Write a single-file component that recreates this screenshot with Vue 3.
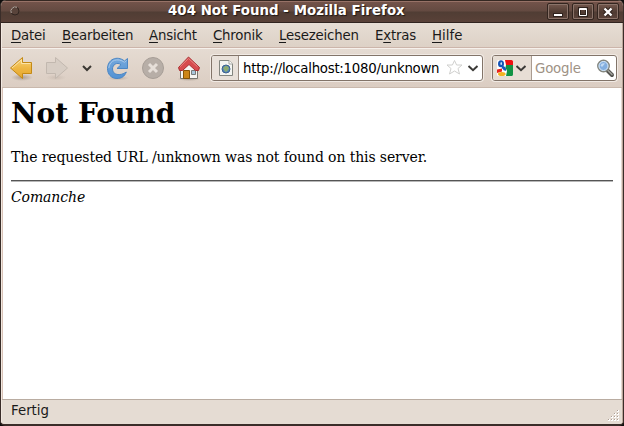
<script setup>
const menus = [
  ['', 'D', 'atei', 'datei'],
  ['', 'B', 'earbeiten', 'bearbeiten'],
  ['', 'A', 'nsicht', 'ansicht'],
  ['', 'C', 'hronik', 'chronik'],
  ['', 'L', 'esezeichen', 'lesezeichen'],
  ['E', 'x', 'tras', 'extras'],
  ['', 'H', 'ilfe', 'hilfe'],
]
const grip = [[10, 1], [7, 4], [10, 4], [4, 7], [7, 7], [10, 7], [1, 10], [4, 10], [7, 10], [10, 10]]
</script>

<template>
  <div class="desktop">
    <div class="window">
      <header class="titlebar">
        <svg class="dot" width="12" height="12" viewBox="0 0 12 12">
          <circle cx="6" cy="6" r="4" fill="#59443b" stroke="#302520" />
          <path d="M2.300 8A4.300 4.300 0 0 1 8 2.300" fill="none" stroke="#b9aaa2" />
        </svg>
        <h2 class="title">404 Not Found - Mozilla Firefox</h2>
        <div class="controls">
          <button class="control" aria-label="Minimieren">
            <svg width="20" height="14" viewBox="0 0 20 14"><path d="M5 8h10v4H5z" fill="#30231e" /><path d="M6 9h8v2H6z" fill="#fff" /></svg>
          </button>
          <button class="control" aria-label="Maximieren">
            <svg width="20" height="14" viewBox="0 0 20 14" fill="none"><path d="M6.5 3.5h7v7h-7z" stroke="#30231e" stroke-width="3" /><path d="M6.5 3.5h7v7h-7z" stroke="#fff" /><path d="M7 4.5h6" stroke="#fff" /></svg>
          </button>
          <button class="control" aria-label="Schließen">
            <svg width="20" height="14" viewBox="0 0 20 14" fill="none"><path d="M6.5 3.5l7 7m0-7l-7 7" stroke="#30231e" stroke-width="4.5" /><path d="M6.5 3.5l7 7m0-7l-7 7" stroke="#fff" stroke-width="2.4" /></svg>
          </button>
        </div>
      </header>

      <div class="frame">
        <nav class="menubar">
          <span v-for="m in menus" :key="m[3]" class="menu" :class="m[3]">{{ m[0] }}<u>{{ m[1] }}</u>{{ m[2] }}</span>
        </nav>

        <div class="toolbar">
          <svg class="tools" width="208" height="39" viewBox="2 49 208 39">
            <defs>
              <linearGradient id="gold" x1="0" y1="0" x2="0" y2="1"><stop offset="0" stop-color="#f9d680" /><stop offset=".5" stop-color="#eeb744" /><stop offset="1" stop-color="#e4a52b" /></linearGradient>
              <linearGradient id="blue" x1="0" y1="0" x2="0" y2="1"><stop offset="0" stop-color="#75a8dc" /><stop offset="1" stop-color="#5292d4" /></linearGradient>
              <radialGradient id="shade"><stop offset="0" stop-color="#77665a" stop-opacity=".48" /><stop offset="1" stop-color="#77665a" stop-opacity="0" /></radialGradient>
            </defs>
            <ellipse cx="22" cy="77.500" rx="11" ry="3.500" fill="url(#shade)" />
            <path d="M10.500 68L22.500 57.500V62.500H31.500V73.500H22.500V78.500Z" fill="url(#gold)" stroke="#c48a16" />
            <path d="M12 68L21.500 59.800V63.500H30.500" fill="none" stroke="#fbe3a7" />
            <ellipse cx="56" cy="77.500" rx="10" ry="3" fill="url(#shade)" opacity=".35" />
            <path d="M67.500 68L55.500 57.500V62.500H46.500V73.500H55.500V78.500Z" fill="#d7cdc4" stroke="#c2b8af" />
            <path d="M83 66L87 70L91 66" fill="none" stroke="#3b3833" stroke-width="2" />
            <ellipse cx="118" cy="78" rx="11" ry="2.500" fill="url(#shade)" opacity=".7" />
            <path d="M127.500 58.500V68.500H117L121 64.700C117 61.600 112.500 64.700 112.500 69C112.500 75 120 76.500 126.300 72C124.500 76.500 121.500 78.500 117 78.500C111 78.500 107.500 74 107.500 68.500C107.500 59.500 117 55 124.500 61Z" fill="url(#blue)" stroke="#4b86c4" />
            <path d="M108.800 68C109.500 60 118 57.500 124.500 62.300L126.400 60.400" fill="none" stroke="#a8c9ea" />
            <circle cx="153" cy="68" r="10.500" fill="#b7aea7" stroke="#a79e97" />
            <path d="M149 64l8 8m0-8l-8 8" stroke="#e6dfd9" stroke-width="3" />
            <ellipse cx="189" cy="79" rx="12" ry="2" fill="url(#shade)" />
            <path d="M180.500 67L189 60L197.500 67V78.500H180.500Z" fill="#f6f5f3" stroke="#77756f" />
            <path d="M183.500 70.500H189.500V78.500H183.500Z" fill="#cc8518" stroke="#875407" />
            <path d="M191.500 70.500H195.500V74.500H191.500Z" fill="#a9c6dd" stroke="#777b7b" />
            <path d="M178.500 67.500L188.500 57L199.500 67.500L198.500 70.500H195.500L189 64.500L182.500 70.500H179.500Z" fill="#d74b4e" stroke="#a82c2f" />
            <path d="M180 66.700L188.500 58.400L197.500 66.700" fill="none" stroke="#ea8a87" />
          </svg>

          <div class="field address">
            <div class="identity">
              <svg width="16" height="18" viewBox="0 0 16 18">
                <path d="M1.500 1.500H11L14.500 5V16.500H1.500Z" fill="#f5f5f2" stroke="#83857f" />
                <path d="M11 1.500V5H14.500" fill="#fff" stroke="#a5a6a1" />
                <circle cx="8" cy="10" r="4" fill="#5084bd" stroke="#3c628f" />
                <path d="M5 9L7.500 6.800L10 7.500L11 9.500L9 12.500L7 12.800Z" fill="#8dab70" />
              </svg>
            </div>
            <span class="url">http://localhost:1080/unknown</span>
            <svg class="star" width="34" height="22" viewBox="0 0 34 22" fill="none">
              <path d="M9.500 3.500L11.600 8H17L13 11.500L14.500 17L9.500 14L4.500 17L6 11.500L2 8H7.400Z" fill="#fff" stroke="#d0d0ce" />
              <path d="M23.500 9L28 13.200L32.500 9" stroke="#3b3a37" stroke-width="2" />
            </svg>
          </div>

          <div class="field search">
            <div class="engine">
              <svg width="38" height="22" viewBox="0 0 38 22">
                <rect x="4" y="3" width="16" height="16" rx="1.500" fill="#fff" />
                <path d="M12 3H18.500Q20 3 20 4.500V8H13Z" fill="#ee1010" />
                <path d="M13 8H20V17.500Q20 19 18.500 19H13L14 14L12.500 10.500Z" fill="#119344" />
                <path d="M4 12.500L9 11.500V14.500L4 16Z" fill="#e8231d" />
                <ellipse cx="8" cy="6.700" rx="3" ry="3.500" fill="#1554b7" />
                <ellipse cx="8.200" cy="6.500" rx=".8" ry="1.500" fill="#d9e6f8" />
                <path d="M9 10Q12.500 11 11.500 13.500" fill="none" stroke="#1757bd" stroke-width="2.800" />
                <ellipse cx="8.800" cy="17" rx="3.800" ry="2" fill="#f3b322" />
                <path d="M23.500 9L28 13.200L32.500 9" fill="none" stroke="#3b3a37" stroke-width="2" />
              </svg>
            </div>
            <span class="placeholder">Google</span>
            <svg class="glass" width="19" height="20" viewBox="0 0 19 20">
              <path d="M11 12L16 17" stroke="#53534f" stroke-width="4" stroke-linecap="round" />
              <path d="M12 12.500L16 16.500" stroke="#a2a29d" stroke-width="1.500" stroke-linecap="round" />
              <circle cx="7.500" cy="8" r="5.700" fill="#83afe0" stroke="#85877f" stroke-width="1.500" />
              <circle cx="7.500" cy="8" r="4.500" fill="none" stroke="#dae9f6" />
              <path d="M4.500 7.500Q5.500 4.500 9 5.500L6 9Z" fill="#c1daf3" />
            </svg>
          </div>
        </div>

        <main class="page">
          <h1>Not Found</h1>
          <p>The requested URL /unknown was not found on this server.</p>
          <hr />
          <address>Comanche</address>
        </main>

        <footer class="status">
          <span>Fertig</span>
          <svg class="grip" width="14" height="14" viewBox="0 0 14 14">
            <g v-for="(g, i) in grip" :key="i"><rect :x="g[0]" :y="g[1]" width="2" height="2" fill="#fff" /><rect :x="g[0]" :y="g[1]" width="1" height="1" fill="#ac9e94" /></g>
          </svg>
        </footer>
      </div>
    </div>
  </div>
</template>

<style>
body { margin: 0; overflow: hidden; }
</style>

<style scoped>
* { box-sizing: border-box; }
.desktop { width: 624px; height: 426px; background: #100e0d; font: 13.33px "DejaVu Sans", sans-serif; color: #1a1a1a; }
.window { height: 426px; display: flex; flex-direction: column; border: 1px solid #3a2d29; border-top: 0; border-bottom-width: 2px; border-radius: 6px 6px 5px 5px; overflow: hidden; background: #e4dad0; }
.titlebar { flex: none; height: 23px; display: flex; align-items: flex-start; border-top: 1px solid #352822; border-bottom: 1px solid #30241f; background: linear-gradient(#977267 0 1px, #72534a 1px, #644a41 10px, #503d34 11px, #594138 21px); }
.dot { margin: 4px 0 0 8px; flex: none; }
.title { margin: 1px 0 0 147px; width: 237px; height: 18px; line-height: 17px; font-size: 13.33px; letter-spacing: .05px; font-weight: bold; color: #fff; white-space: nowrap; text-shadow: 1px 1px 1px #1f1713; }
.controls { display: flex; gap: 3px; margin: 2px 0 0 142px; }
.control { width: 22px; height: 17px; padding: 0; display: flex; align-items: center; justify-content: center; border: 1px solid #33251f; border-radius: 2px; background: linear-gradient(#75584e, #4f3b32 55%, #5c443b); box-shadow: inset 0 0 0 1px #8a7369; }
.control svg { flex: none; }
.frame { flex: 1; display: flex; flex-direction: column; min-height: 0; border-left: 1px solid #f2e9e1; border-right: 1px solid #bba69a; }
.menubar { flex: none; height: 25px; display: flex; padding: 4px 0 0 9px; line-height: 18px; background: linear-gradient(#e6ddd4, #ddd1c6); border-bottom: 1px solid #ccb5aa; }
.menu { white-space: pre; flex: none; letter-spacing: -.2px; }
.menu u { text-underline-offset: 2px; text-decoration-thickness: 1px; }
.datei { width: 51px; }
.bearbeiten { width: 87px; }
.ansicht { width: 64px; }
.chronik { width: 66px; }
.lesezeichen { width: 96px; }
.extras { width: 57px; }
.hilfe { letter-spacing: 0; }
.toolbar { flex: none; height: 40px; display: flex; align-items: flex-start; border-top: 1px solid #f6f1ec; border-bottom: 1px solid #c9b8ac; background: linear-gradient(#e5dbd2, #dbcdc2); }
.tools { flex: none; }
.field { height: 26px; margin-top: 6px; display: flex; align-items: center; border: 1px solid #827469; border-radius: 3px; background: #fff; box-shadow: 0 0 0 1px #f1eae4; overflow: hidden; }
.address { width: 272px; margin-left: 1px; }
.identity { flex: none; width: 27px; height: 24px; display: flex; align-items: center; justify-content: center; padding-left: 2px; background: #e9e1da; border-right: 1px solid #9b8d83; }
.url { width: 201px; padding-left: 4px; white-space: nowrap; letter-spacing: -.27px; color: #000; flex: none; }
.star { margin-left: 5px; flex: none; }
.search { width: 125px; margin-left: 9px; }
.engine { flex: none; width: 39px; height: 24px; display: flex; align-items: center; background: #e7ded5; border-right: 1px solid #aa9c91; }
.placeholder { width: 62px; padding-left: 3px; letter-spacing: -.2px; color: #9e9285; flex: none; }
.glass { margin-left: 2px; flex: none; }
.page { flex: 1; min-height: 0; border-left: 1px solid #d9c3b8; border-right: 1px solid #e6dad2; background: #fff; padding: 9px 8px 0; font-family: "DejaVu Serif", serif; color: #000; }
h1 { margin: 0; height: 34px; line-height: 34px; font-size: 28px; white-space: nowrap; }
p { margin: 17px 0 0; height: 18px; line-height: 18px; font-size: 14px; letter-spacing: -.11px; white-space: nowrap; }
hr { margin: 14px 0 0; height: 2px; border: 0; border-top: 1px solid #555; border-bottom: 1px solid #b7b7b7; }
address { margin-top: 6px; line-height: 18px; font-size: 14px; letter-spacing: -.1px; }
.status { flex: none; height: 25px; display: flex; justify-content: space-between; padding: 2px 1px 0 9px; line-height: 17px; border-top: 1px solid #b9aca1; background: #e5dcd3; }
.grip { margin-top: 7px; }
</style>
